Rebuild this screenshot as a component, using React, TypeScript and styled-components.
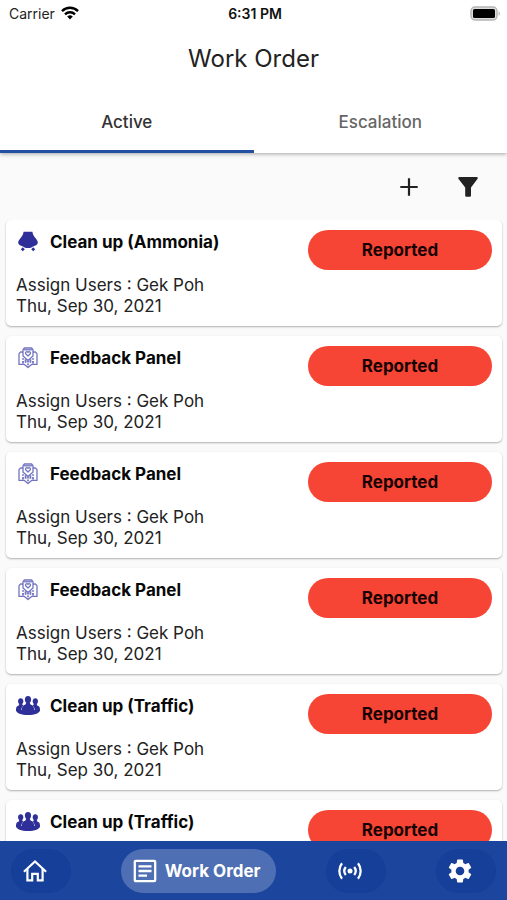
import React, { useState } from "react";
import styled, { createGlobalStyle } from "styled-components";

const GlobalStyle = createGlobalStyle`
  *, *::before, *::after { box-sizing: border-box; }
  body { margin: 0; background: #fafafa; }
`;

const BaseButton = styled.button`
  padding: 0;
  border: 0;
  background: none;
  color: inherit;
  font: inherit;
  cursor: pointer;
`;

const Screen = styled.div`
  display: flex;
  flex-direction: column;
  height: 100vh;
  overflow: hidden;
  background: #fafafa;
  color: #222;
  font-family: Inter, "Liberation Sans", sans-serif;
`;

const Header = styled.header`
  flex: none;
  background: #fff;
  box-shadow: 0 1px 4px rgba(0, 0, 0, 0.35);
`;

const StatusBar = styled.div`
  display: grid;
  grid-template-columns: 1fr auto 1fr;
  align-items: center;
  height: 26px;
  padding: 0 6px 0 9px;
  font-size: 14px;
`;

const Carrier = styled.span`
  display: flex;
  align-items: center;
  gap: 6px;
`;

const Clock = styled.span`
  font-weight: 600;
  color: #111;
`;

const Battery = styled.span`
  display: flex;
  justify-content: flex-end;
`;

const Title = styled.h1`
  margin: 0;
  line-height: 66px;
  text-align: center;
  font-size: 24px;
  font-weight: 400;
`;

const Tabs = styled.div`
  display: flex;
`;

const Tab = styled(BaseButton)<{ $active: boolean }>`
  flex: 1;
  height: 61px;
  padding-top: 2px;
  border-bottom: 3px solid ${(p) => (p.$active ? "#2450a4" : "transparent")};
  font-size: 17px;
  font-weight: 500;
  color: ${(p) => (p.$active ? "#333" : "#666")};
`;

const Toolbar = styled.div`
  flex: none;
  display: flex;
  align-items: center;
  justify-content: flex-end;
  gap: 31px;
  height: 67px;
  padding-right: 25px;
`;

const IconButton = styled(BaseButton)`
  display: flex;
`;

const List = styled.ul`
  flex: 1;
  min-height: 0;
  margin: 0;
  padding: 0 5px 10px 6px;
  list-style: none;
  overflow-y: auto;
  scrollbar-width: none;
  display: flex;
  flex-direction: column;
  gap: 10px;
`;

const Card = styled.li`
  flex: none;
  display: flex;
  justify-content: space-between;
  padding: 10px 10px 9px;
  background: #fff;
  border-radius: 5px;
  box-shadow: 0 1px 2px rgba(0, 0, 0, 0.3);
`;

const CardTitle = styled.h2`
  display: flex;
  align-items: center;
  gap: 10px;
  margin: 0 0 21px;
  line-height: 24px;
  font-size: 17px;
  font-weight: 700;
  color: #080808;
`;

const Detail = styled.p`
  margin: 0;
  font-size: 17px;
  line-height: 21px;
`;

const Status = styled(BaseButton)`
  flex: none;
  width: 184px;
  height: 40px;
  border-radius: 20px;
  background: #f64435;
  color: #160202;
  font-size: 17px;
  font-weight: 700;
`;

const Nav = styled.nav`
  flex: none;
  display: flex;
  align-items: center;
  justify-content: space-between;
  height: 59px;
  padding: 0 11px;
  background: #1c469d;
`;

const NavItem = styled(BaseButton)<{ $active: boolean }>`
  display: flex;
  align-items: center;
  gap: 8px;
  height: 44px;
  padding: 0 16px 0 12px;
  border-radius: 22px;
  background: ${(p) => (p.$active ? "#4e6fb3" : "#153f98")};
  color: #fff;
  font-size: 17px;
  font-weight: 700;
`;

const IconSlot = styled.span`
  display: flex;
  justify-content: center;
  width: 24px;
  height: 24px;

  svg {
    flex: none;
  }
`;

const WifiIcon = () => (
  <svg width="18" height="14" viewBox="0 0 18 14" fill="none" stroke="#000" strokeWidth="2.4" aria-hidden="true">
    <path d="M1 5.1a11.4 11.4 0 0 1 16 0" />
    <path d="M4 8.3a7.2 7.2 0 0 1 10 0" />
    <path d="M9 13.6 6.2 10.6a4.1 4.1 0 0 1 5.6 0z" fill="#000" stroke="none" />
  </svg>
);

const BatteryIcon = () => (
  <svg width="31" height="15" viewBox="0 0 31 15" role="img" aria-label="Battery full">
    <rect x="1" y="1" width="26" height="13" rx="4" fill="#ddd" stroke="#b4b4b4" strokeWidth="1.4" />
    <rect x="3" y="3" width="22" height="9" rx="1.6" fill="#000" />
    <path d="M28.6 5.2c1.6.8 1.6 3.8 0 4.6z" fill="#aaa" />
  </svg>
);

const PlusIcon = () => (
  <svg width="28" height="28" viewBox="0 0 28 28" stroke="#222" strokeWidth="2.2" aria-hidden="true">
    <path d="M14 5.3v17.4M5.3 14h17.4" />
  </svg>
);

const FilterIcon = () => (
  <svg width="28" height="28" viewBox="0 0 28 28" fill="#222" aria-hidden="true">
    <path d="M5 4h18q1.3.5.6 1.8L17 14.4v8.2q0 1.2-1.2 1.2h-3.4q-1.2 0-1.2-1.2v-8.2L4.4 5.8Q3.8 4.4 5 4z" />
  </svg>
);

const AmmoniaIcon = () => (
  <svg width="24" height="24" viewBox="0 0 24 24" fill="#2e2f98" aria-hidden="true">
    <path d="M7.6 1.8h8.8c.4 3 1.700 4.700 3.400 6.700 1.700 2 2.400 3.400 1.800 5-.6 1.600-2.200 2.200-3.900 2.700-1.600.5-2.600 1.900-5.700 1.900s-4.100-1.400-5.700-1.900c-1.700-.5-3.300-1.100-3.900-2.700-.6-1.600.1-3 1.800-5 1.700-2 3-3.700 3.400-6.700z" />
    <path d="m6.800 17.200 2 2-2 2-2-2zM17.200 17.200l2 2-2 2-2-2z" />
  </svg>
);

const FeedbackIcon = () => (
  <svg width="24" height="24" viewBox="0 0 24 24" fill="none" stroke="#7374c0" strokeWidth="1.3" strokeLinejoin="round" aria-hidden="true">
    <path d="M7 6H4.600L3 7.600V18.400h5.400L12 21.600l3.600-3.200H21V7.600L19.400 6H17" />
    <path d="M7 10V3.600L8.400 2h7.200L17 3.600V10l-5 4.400z" />
    <path d="M7.500 3.800h9" />
    <path d="m12 10-2.300-2.200c-.8-1.400.9-3 2.300-1.500 1.400-1.500 3.100.1 2.300 1.500z" />
    <path strokeWidth="1.800" d="M7 12.200v1.600M12 15v1.600M17 12.200v1.600M7 15v2.600M9.600 13.200v3.600M14.400 13.200v3.600M17 15v2.600M12 17.600v1.600" />
  </svg>
);

const TrafficIcon = () => (
  <svg width="24" height="24" viewBox="0 0 24 24" fill="#2e2f98" aria-hidden="true">
    <ellipse cx="12" cy="5.600" rx="3.100" ry="3.500" />
    <ellipse cx="4.700" cy="7.200" rx="2.600" ry="2.900" />
    <ellipse cx="19.300" cy="7.200" rx="2.600" ry="2.900" />
    <path d="M10.200 8h3.600c0 1.900.6 2.500 2 3.100 2 .9 2.400 2.600 2.400 6.900H5.800c0-4.300.4-6 2.400-6.900 1.400-.6 2-1.200 2-3.100z" />
    <path d="M3.300 9h2.800c0 1.500.3 1.900 1.100 2.400-1.600 1.500-2 3.300-2 6.600L0 17c0-3.300.3-4.200 1.700-4.900C2.900 11.500 3.300 11 3.300 9zM20.700 9h-2.800c0 1.500-.3 1.900-1.100 2.400 1.600 1.500 2 3.300 2 6.600l5.200-1c0-3.300-.3-4.200-1.700-4.900-1.200-.6-1.600-1.100-1.600-3.100z" />
    <path d="M0 16h24c0 3-5.300 5-12 5S0 19 0 16z" />
  </svg>
);

const HomeIcon = () => (
  <svg width="24" height="24" viewBox="0 0 24 24" fill="none" stroke="currentColor" strokeWidth="2.2" aria-hidden="true">
    <path d="M.9 12.800 12 2.400l11.100 10.400" />
    <path d="M4.400 10v11.400h4.800v-6.600h5.600v6.600h4.800V10" />
  </svg>
);

const ArticleIcon = () => (
  <svg width="24" height="24" viewBox="0 0 24 24" fill="none" stroke="currentColor" strokeWidth="2.3" aria-hidden="true">
    <rect x="1.800" y="1.800" width="20.400" height="20.400" rx="1" />
    <path d="M5.500 7.300H18.500M5.500 12H18.500M5.500 16.700h8.500" />
  </svg>
);

const BroadcastIcon = () => (
  <svg width="24" height="24" viewBox="0 0 24 24" fill="none" stroke="currentColor" strokeWidth="2.300" aria-hidden="true">
    <circle cx="12" cy="12" r="2.500" fill="currentColor" stroke="none" />
    <path d="M7.800 8a6.500 6.500 0 0 0 0 8M16.200 8a6.500 6.500 0 0 1 0 8M4 4.300a12.500 12.500 0 0 0 0 15.400M20 4.300a12.500 12.500 0 0 1 0 15.400" />
  </svg>
);

const SettingsIcon = () => (
  <svg width="24" height="24" viewBox="2 2 20 20" fill="currentColor" aria-hidden="true">
    <path d="M19.140 12.940c.04-.3.060-.610.060-.940 0-.320-.020-.640-.070-.940l2.030-1.580c.18-.14.230-.410.120-.610l-1.920-3.320c-.12-.22-.37-.29-.59-.22l-2.390.96c-.5-.38-1.030-.7-1.620-.940l-.36-2.540c-.04-.24-.24-.41-.48-.41h-3.840c-.24 0-.43.17-.47.41l-.36 2.540c-.59.24-1.130.57-1.620.94l-2.390-.96c-.22-.08-.47 0-.59.22L2.740 8.870c-.12.21-.08.470.12.610l2.030 1.580c-.05.3-.090.630-.090.940s.02.640.070.940l-2.030 1.580c-.18.14-.23.41-.12.610l1.920 3.320c.12.22.37.29.59.22l2.390-.96c.5.38 1.030.7 1.620.940l.36 2.540c.05.24.24.41.48.41h3.840c.24 0 .44-.17.47-.41l.36-2.540c.59-.24 1.130-.56 1.620-.94l2.390.96c.22.08.47 0 .59-.22l1.920-3.320c.12-.22.070-.470-.12-.610l-2.010-1.580zM12 15.600c-1.980 0-3.600-1.620-3.600-3.600s1.620-3.600 3.600-3.600 3.600 1.620 3.600 3.600-1.620 3.600-3.600 3.600z" />
  </svg>
);

const orders = [
  { name: "Clean up (Ammonia)", Icon: AmmoniaIcon },
  { name: "Feedback Panel", Icon: FeedbackIcon },
  { name: "Feedback Panel", Icon: FeedbackIcon },
  { name: "Feedback Panel", Icon: FeedbackIcon },
  { name: "Clean up (Traffic)", Icon: TrafficIcon },
  { name: "Clean up (Traffic)", Icon: TrafficIcon },
];

const destinations = [
  { name: "Home", Icon: HomeIcon },
  { name: "Work Order", Icon: ArticleIcon },
  { name: "Broadcast", Icon: BroadcastIcon },
  { name: "Settings", Icon: SettingsIcon },
];

export default function App() {
  const [tab, setTab] = useState("Active");
  const [page, setPage] = useState("Work Order");
  return (
    <Screen>
      <GlobalStyle />
      <Header>
        <StatusBar>
          <Carrier>Carrier <WifiIcon /></Carrier>
          <Clock>6:31 PM</Clock>
          <Battery><BatteryIcon /></Battery>
        </StatusBar>
        <Title>Work Order</Title>
        <Tabs role="tablist">
          {["Active", "Escalation"].map((name) => (
            <Tab key={name} role="tab" aria-selected={tab === name} $active={tab === name} onClick={() => setTab(name)}>
              {name}
            </Tab>
          ))}
        </Tabs>
      </Header>
      <Toolbar>
        <IconButton aria-label="Add work order"><PlusIcon /></IconButton>
        <IconButton aria-label="Filter"><FilterIcon /></IconButton>
      </Toolbar>
      <List>
        {orders.map(({ name, Icon }, i) => (
          <Card key={i}>
            <div>
              <CardTitle><IconSlot><Icon /></IconSlot>{name}</CardTitle>
              <Detail>Assign Users : Gek Poh</Detail>
              <Detail>Thu, Sep 30, 2021</Detail>
            </div>
            <Status>Reported</Status>
          </Card>
        ))}
      </List>
      <Nav>
        {destinations.map(({ name, Icon }) => (
          <NavItem key={name} $active={page === name} aria-label={name} onClick={() => setPage(name)}>
            <Icon />
            <span>{page === name ? name : ""}</span>
          </NavItem>
        ))}
      </Nav>
    </Screen>
  );
}
